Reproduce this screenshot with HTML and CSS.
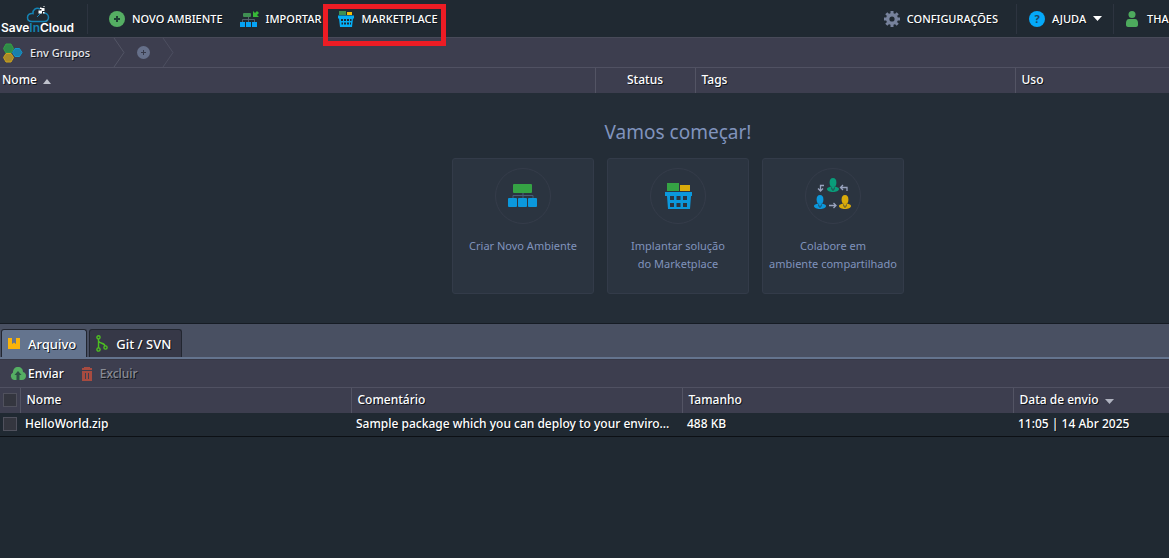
FILE: index.html
```html
<!DOCTYPE html>
<html lang="pt-BR">
<head>
<meta charset="utf-8">
<meta name="viewport" content="width=device-width, initial-scale=1">
<title>SaveInCloud</title>
<link rel="stylesheet" href="styles.css">
</head>
<body>
<svg class="defs" width="0" height="0" aria-hidden="true">
  <symbol id="basket" viewBox="0 0 28 27">
    <path fill="#35a344" d="M3 1h12v8H3z"/>
    <path fill="#d9ab0b" d="M16 3h10v6H16z"/>
    <path class="basket-body" fill-rule="evenodd" d="M1 10h27v4h-1l-1 13H4L3 14H1zM6 14v4h4v-4zM12.500 14v4h4v-4zM19 14v4h4v-4zM6 21v4h4v-4zM12.500 21v4h4v-4zM19 21v4h4v-4z"/>
  </symbol>
  <symbol id="basket-small" viewBox="0 0 16 16">
    <path fill="#3f8f52" d="M1 0h7v4H1z"/>
    <path fill="#f5bd0a" d="M9 1h5v3H9z"/>
    <path fill="#05aef5" fill-rule="evenodd" d="M0 4.500h16v3h-1l-1 8.500H2L1 7.500H0zM3 8v2h2V8zM6 8v2h2V8zM9 8v2h2V8zM12 8v2h1.500V8zM3.500 11.500v2H5v-2zM6 11.500v2h2v-2zM9 11.500v2h2v-2zM12 11.500v2h1v-2z"/>
  </symbol>
  <symbol id="person" viewBox="0 0 12 14">
    <ellipse cx="6" cy="4.500" rx="3.400" ry="4.500"/>
    <path d="M4 8.500h4c2 1 4 1 4 2.500 0 2-3 3-6 3s-6-1-6-3c0-1.500 2-1.500 4-2.500z"/>
    <path d="M4.500 9.500l1 3M7.500 9.500l-1 3" fill="none" stroke="#2b3440" stroke-width=".8"/>
  </symbol>
</svg>

<header class="topbar">
  <a class="logo" href="#" aria-label="SaveInCloud">
    <svg class="logo-cloud" width="24" height="17" viewBox="0 0 24 17">
      <path d="M14 3C10 1 6.500 4 7 7.500 3.500 7 1.500 9 1.500 11.500S3.500 15.500 6 15.500h12c3 0 4.500-2 4.500-4.200 0-2.500-2-4.300-4.700-4.300" fill="none" stroke="#1583b4" stroke-width="1.500"/>
      <path d="M11 11l4-4" stroke="#1583b4"/>
      <path d="M12.500 4.500h3.500v3h-3.500zM15.500 2h3v3h-3zM14 1.500h1.500V3H14zM17 6h1.500v1.500H17zM17.500 0h1v1h-1z" fill="#fff"/>
    </svg>
    <span class="logo-text">Save<span class="logo-in">In</span>Cloud</span>
  </a>
  <nav class="actions">
    <button type="button" class="top-button">
      <svg width="16" height="16" viewBox="0 0 16 16"><circle cx="8" cy="8" r="8" fill="#55ae63"/><path d="M8 5v6M5 8h6" stroke="#1e3f34" stroke-width="2"/></svg>
      Novo ambiente
    </button>
    <button type="button" class="top-button">
      <svg width="19" height="16" viewBox="0 0 19 16"><rect x="3" y="2" width="8" height="4" rx="1" fill="#3f8f52"/><path d="M8.500 6v5M2.500 11V8.500h12V11" fill="none" stroke="#54606c"/><path d="M0 11h5v5H0zM6 11h5v5H6zM12 11h5v5h-5z" fill="#05a3f5"/><path d="M13 0v6h6l-2-2 2-2-2-2-2 2z" fill="#37b837"/></svg>
      Importar
    </button>
    <span class="highlighted">
      <button type="button" class="top-button">
        <svg width="16" height="16" viewBox="0 0 16 16"><use href="#basket-small"/></svg>
        Marketplace
      </button>
    </span>
  </nav>
  <nav class="account">
    <button type="button" class="top-button settings">
      <svg width="16" height="16" viewBox="0 0 16 16"><circle cx="8" cy="8" r="4.300" fill="none" stroke="#77829c" stroke-width="3.400"/><path d="M8 0v3M8 13v3M0 8h3M13 8h3M2.300 2.300l2 2M11.700 11.700l2 2M2.300 13.700l2-2M11.700 4.300l2-2" stroke="#77829c" stroke-width="3"/></svg>
      Configurações
    </button>
    <button type="button" class="top-button help">
      <span class="help-mark">?</span>
      Ajuda
      <svg width="9" height="5" viewBox="0 0 9 5"><path d="M0 0h9L4.500 5z" fill="#fff"/></svg>
    </button>
    <button type="button" class="top-button user">
      <svg width="12" height="16" viewBox="0 0 12 16"><circle cx="6" cy="3.500" r="3.500" fill="#4daa5d"/><path d="M3 8h6c2 0 3 2 3 4v2c0 1-1 2-2 2H2c-1 0-2-1-2-2v-2c0-2 1-4 3-4z" fill="#4daa5d"/></svg>
      THA
    </button>
  </nav>
</header>

<main>
  <section class="environments">
    <div class="groups">
      <button type="button" class="group-name">
        <svg width="20" height="20" viewBox="0 0 20 20" stroke-width="1"><path d="M3 1h5l2.500 4.500L8 10H3L.5 5.500z" fill="#2f8b49" stroke="#35a344"/><path d="M3 10.500h5l2.500 4L8 19H3L.5 14.500z" fill="#a98a28" stroke="#cda31c"/><path d="M12 5.500h4.500l2.500 4-2.500 4H12l-2.500-4z" fill="#1980ab" stroke="#1496cd"/></svg>
        Env Grupos
      </button>
      <svg width="12" height="29" viewBox="0 0 12 29"><path d="M1 0l10 14.500L1 29" fill="none" stroke="#535565"/></svg>
      <button type="button" class="add-group" aria-label="Adicionar grupo">
        <svg width="13" height="13" viewBox="0 0 13 13"><circle cx="6.500" cy="6.500" r="6.500" fill="#66708a"/><path d="M6.500 4v5M4 6.500h5" stroke="#373a4a"/></svg>
      </button>
      <svg width="12" height="29" viewBox="0 0 12 29"><path d="M1 0l10 14.500L1 29" fill="none" stroke="#4d4f60"/></svg>
    </div>
    <table class="grid env-grid">
      <thead>
        <tr>
          <th>Nome <svg class="sort" width="8" height="5" viewBox="0 0 8 5"><path d="M0 5h8L4 0z" fill="#bfc2cc"/></svg></th>
          <th class="col-status">Status</th>
          <th class="col-tags">Tags</th>
          <th class="col-usage">Uso</th>
        </tr>
      </thead>
    </table>
    <div class="welcome">
      <h1>Vamos começar!</h1>
      <div class="cards">
        <button type="button" class="card">
          <span class="card-icon">
            <svg width="30" height="24" viewBox="0 0 30 24"><path d="M15 9v5M5 14v-2.500h20V14" fill="none" stroke="#475c78"/><rect x="5" y="0" width="19" height="9" rx="1" fill="#35a344"/><g fill="#0b98dc"><rect x="0" y="14" width="9" height="9" rx="1"/><rect x="10" y="14" width="9" height="9" rx="1"/><rect x="20" y="14" width="9" height="9" rx="1"/></g></svg>
          </span>
          Criar Novo Ambiente
        </button>
        <button type="button" class="card">
          <span class="card-icon"><svg width="28" height="27" viewBox="0 0 28 27"><use href="#basket"/></svg></span>
          Implantar solução<br>do Marketplace
        </button>
        <button type="button" class="card">
          <span class="card-icon">
            <svg class="team" width="38" height="32" viewBox="0 0 38 32"><use href="#person" x="13" y="0" width="12" height="14" fill="#099c7a"/><use href="#person" x="0" y="17" width="12" height="14" fill="#0b98dc"/><use href="#person" x="25" y="17" width="12" height="14" fill="#d9ab0b"/><g fill="none" stroke="#99a3be" stroke-width="1.300"><path d="M10 7.500H6.500V12M4 10.500l2.500 2.500L9 10.500M27 9.500h6V13M29 7l-2.500 2.500L29 12M15 27.500h7M19.500 25l2.500 2.500-2.500 2.500"/></g></svg>
          </span>
          Colabore em<br>ambiente compartilhado
        </button>
      </div>
    </div>
  </section>

  <section class="deploy">
    <div class="tabs" role="tablist">
      <button type="button" class="tab active" role="tab" aria-selected="true">
        <svg width="12" height="11" viewBox="0 0 12 11"><path d="M0 0h4v6l2-1.500L8 6V0h4v11H0z" fill="#fab40a"/></svg>
        Arquivo
      </button>
      <button type="button" class="tab" role="tab" aria-selected="false">
        <svg width="12" height="17" viewBox="0 0 12 17" fill="none" stroke="#4dc021" stroke-width="1.400"><circle cx="2.500" cy="2.300" r="1.600"/><circle cx="2.500" cy="14.500" r="1.600"/><circle cx="9.500" cy="12.500" r="1.600"/><path d="M2.500 4v9M2.500 6c1 3 6 1.500 6.500 5"/></svg>
        Git / SVN
      </button>
    </div>
    <div class="toolbar">
      <button type="button" class="tool">
        <svg width="16" height="13" viewBox="0 0 16 13"><path d="M4 13a4 4 0 0 1-1-7.500C3 2 5 0 8 0s5 2 5 5c2 .5 3 2 3 4s-1.500 4-4 4z" fill="#55ae63"/><path d="M8 4l3.500 4H9.500v5h-3V8h-2z" fill="#2d5145"/></svg>
        Enviar
      </button>
      <button type="button" class="tool delete" disabled>
        <svg width="10" height="14" viewBox="0 0 10 14"><path fill-rule="evenodd" d="M2 0h6v1h2v2H0V1h2zM0 4h10v10H0zM3 6v6h1V6zM6 6v6h1V6z" fill="#a74b40"/></svg>
        Excluir
      </button>
    </div>
    <table class="grid files">
      <thead>
        <tr>
          <th class="col-check"><input type="checkbox" aria-label="Selecionar todos"></th>
          <th>Nome</th>
          <th>Comentário</th>
          <th>Tamanho</th>
          <th class="col-date">Data de envio <svg class="sort" width="9" height="5" viewBox="0 0 9 5"><path d="M0 0h9L4.500 5z" fill="#b0b3c0"/></svg></th>
        </tr>
      </thead>
      <tbody>
        <tr>
          <td class="col-check"><input type="checkbox" aria-label="Selecionar HelloWorld.zip"></td>
          <td>HelloWorld.zip</td>
          <td>Sample package which you can deploy to your enviro...</td>
          <td>488 KB</td>
          <td>11:05 | 14 Abr 2025</td>
        </tr>
      </tbody>
    </table>
  </section>
</main>
</body>
</html>
```
FILE: styles.css
```css
* { box-sizing: border-box; }

body {
  margin: 0;
  min-height: 100vh;
  display: flex;
  flex-direction: column;
  overflow: hidden;
  background: #202932;
  color: #fff;
  font: 500 12px/16px "Noto Sans", "Open Sans", sans-serif;
  text-shadow: 1px 1px 0 #11161c;
}

button {
  display: flex;
  align-items: center;
  padding: 0;
  border: 0;
  background: none;
  color: inherit;
  font: inherit;
  text-shadow: inherit;
  white-space: nowrap;
}

svg { flex: none; display: block; }
.defs { position: absolute; }

/* Top bar */
.topbar {
  display: flex;
  align-items: center;
  height: 38px;
  flex: none;
  background: #202932;
  border-bottom: 1px solid #484a59;
}

.logo {
  display: flex;
  flex-direction: column;
  align-items: center;
  width: 73px;
  margin-left: 1px;
  padding-top: 2px;
  color: #fff;
  text-decoration: none;
  text-shadow: none;
}
.logo-cloud { margin-bottom: -2px; }
.logo-text { font: 600 12px/13px "Inter", sans-serif; }
.logo-in { color: #1583b4; }

.actions {
  display: flex;
  align-items: center;
  gap: 17px;
  height: 30px;
  margin-left: 13px;
  padding-left: 21px;
  border-left: 1px solid #2d3440;
}
.top-button { gap: 7px; height: 30px; font-size: 11px; text-transform: uppercase; }
.highlighted { position: relative; }
.highlighted::after {
  content: "";
  position: absolute;
  inset: 0 -8px -12px -15px;
  border: 5px solid #ed1c24;
}
.basket-body { fill: #0b98dc; }

.account { display: flex; margin-left: auto; }
.settings { padding-right: 18px; }
.help { width: 97px; padding-left: 12px; border-left: 1px solid #2d3440; }
.help-mark {
  width: 16px;
  height: 16px;
  border-radius: 50%;
  background: #05a9fa;
  color: #1d4463;
  font-weight: 700;
  text-shadow: none;
}
.user { width: 56px; padding-left: 12px; gap: 9px; overflow: hidden; border-left: 1px solid #2d3440; }

/* Environments */
main { display: flex; flex-direction: column; flex: 1; }
.environments { display: flex; flex-direction: column; height: 285px; background: #242d37; }
.groups { display: flex; align-items: center; height: 29px; background: #3d3e4f; }
.group-name { gap: 7px; width: 113px; padding-left: 3px; color: #e6e7ec; font-size: 11px; }
.add-group { margin: 0 12px; }

.grid { width: 100%; table-layout: fixed; border-collapse: collapse; }
.grid th, .grid td { height: 24px; padding: 0 6px; text-align: left; white-space: nowrap; font-weight: 500; }
.grid th {
  height: 25px;
  background: #3d3e4f;
  border-top: 1px solid #505162;
  border-left: 1px solid #535464;
}
.grid th:first-child { border-left: 0; }
.sort { display: inline-block; margin-left: 3px; vertical-align: 0; }
.env-grid th:first-child { padding-left: 2px; }
.env-grid .col-status { width: 100px; text-align: center; }
.col-tags { width: 320px; }
.col-usage { width: 154px; }

.welcome { display: flex; flex-direction: column; align-items: center; padding: 26px 0 0 187px; }
h1 {
  margin: 0 0 13px;
  color: #8093bd;
  font-size: 19px;
  line-height: 26px;
  font-weight: 400;
  text-shadow: none;
}
.cards { display: flex; gap: 13px; }
.card {
  flex-direction: column;
  width: 142px;
  height: 136px;
  padding-top: 9px;
  border: 1px solid #333b49;
  border-radius: 3px;
  background: #2b3440;
  color: #8093bd;
  font-size: 11px;
  font-weight: 400;
  line-height: 18px;
  text-shadow: none;
}
.card-icon {
  display: flex;
  align-items: center;
  justify-content: center;
  width: 56px;
  height: 56px;
  margin-bottom: 13px;
  border: 1px solid #353c4a;
  border-radius: 50%;
}
.team { margin-bottom: 4px; }

/* Deployment manager */
.deploy { border-top: 1px solid #161c24; }
.tabs {
  display: flex;
  align-items: flex-end;
  gap: 2px;
  height: 35px;
  padding-left: 1px;
  background: #495062;
  border-bottom: 2px solid #64748e;
}
.tab {
  gap: 8px;
  height: 28px;
  padding: 0 10px 0 6px;
  border: 1px solid #222630;
  border-bottom: 0;
  border-radius: 3px 3px 0 0;
  background: #363847;
  font-size: 13px;
}
.tab.active { background: #64748e; }
.toolbar { display: flex; align-items: center; gap: 18px; height: 28px; padding-left: 10px; background: #3d3e4f; border-top: 1px solid #373846; }
.tool { gap: 2px; }
.delete { gap: 8px; color: #898b94; }

.files .col-check { width: 20px; padding: 0 0 0 3px; }
.files .col-date { width: 156px; }
.files tbody tr { background: #202932; border-bottom: 1px solid #0c1015; }
.files td { padding: 0 5px; }
input[type="checkbox"] {
  appearance: none;
  display: block;
  width: 14px;
  height: 14px;
  margin: 0;
  border: 1px solid #50515d;
  background: #34363f;
}
```
